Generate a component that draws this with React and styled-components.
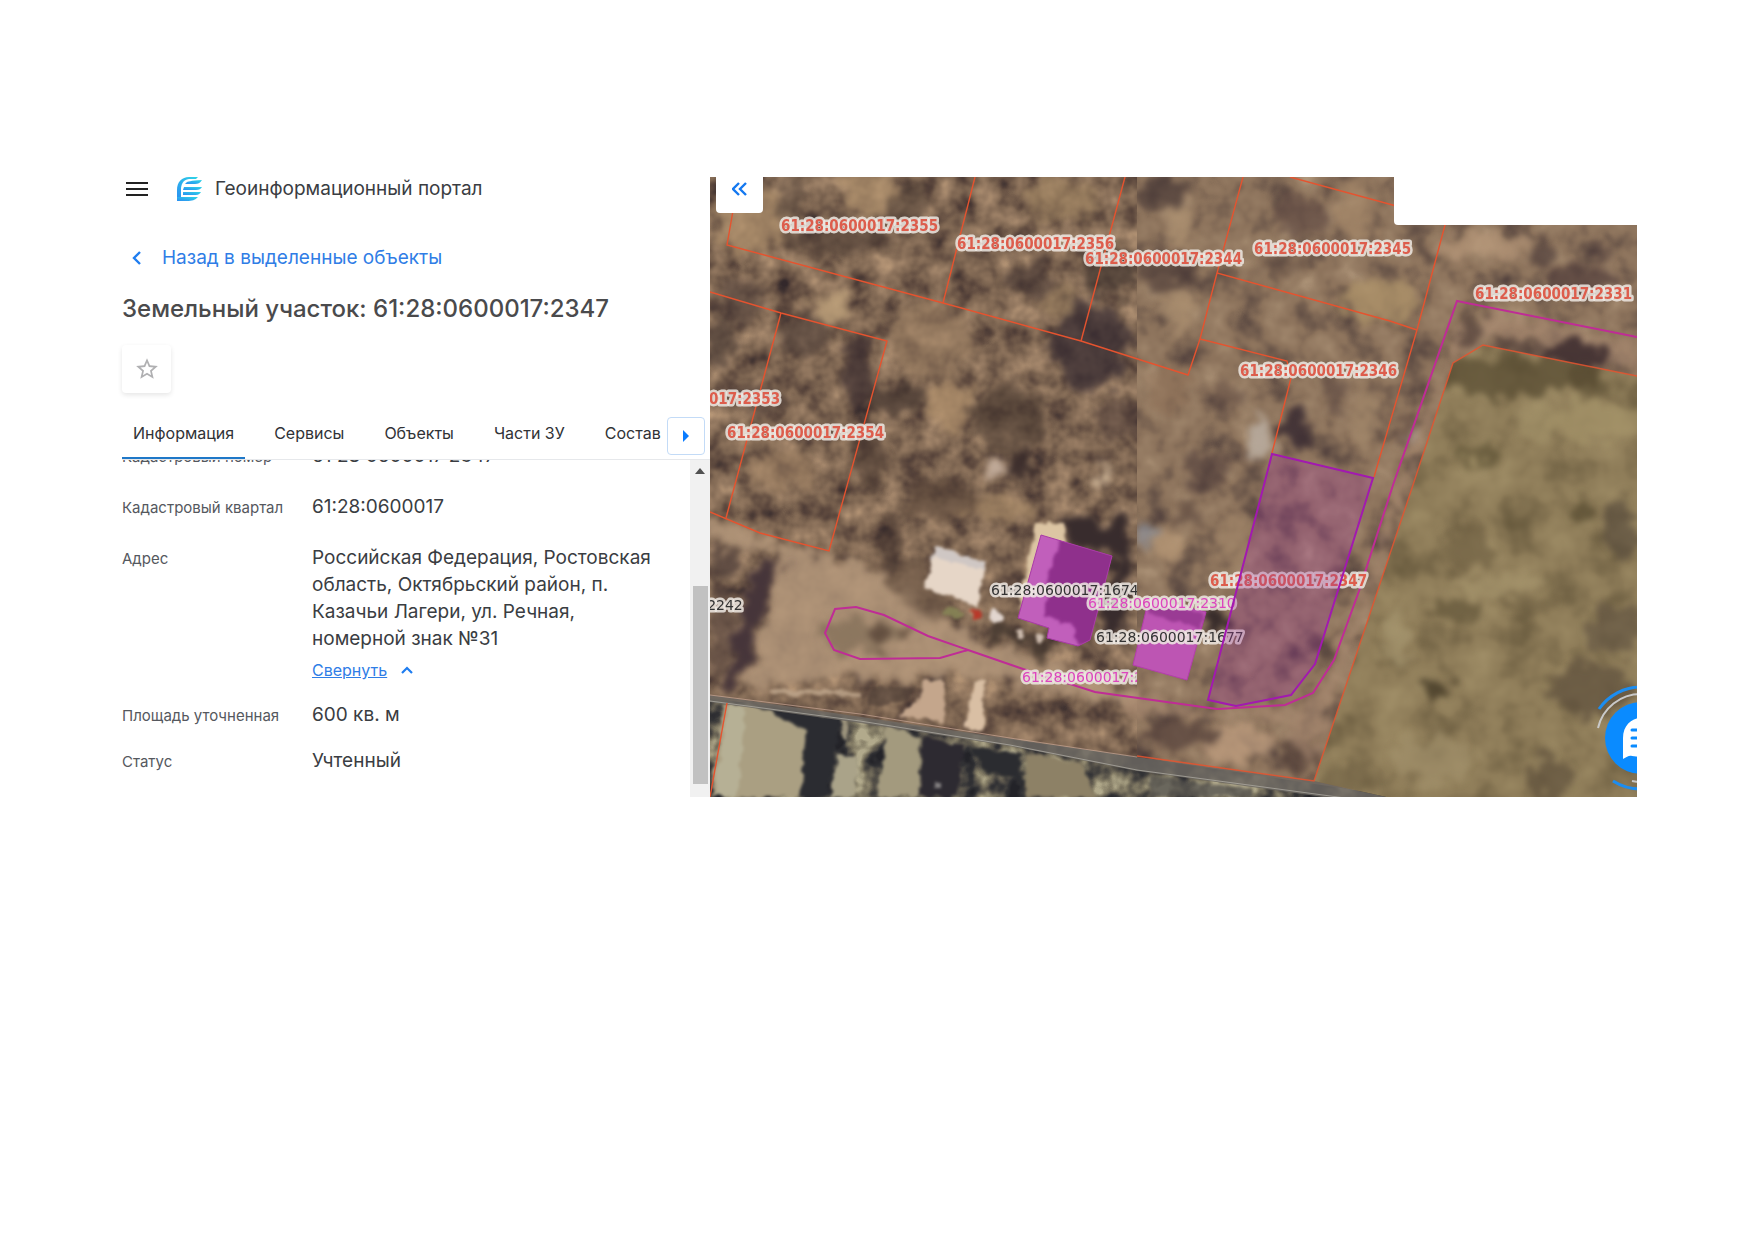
import React, { useState } from "react";
import styled, { createGlobalStyle } from "styled-components";

const GlobalStyle = createGlobalStyle`
  * {
    box-sizing: border-box;
  }
  body {
    margin: 0;
    background: #ffffff;
    color: #3a3d42;
    font-family: Inter, "Liberation Sans", sans-serif;
  }
  button {
    font-family: inherit;
    cursor: pointer;
  }
`;

const Page = styled.div`
  padding: 177px 118px;
`;

const Portal = styled.div`
  display: flex;
  overflow: hidden;
`;

const Panel = styled.section`
  width: 592px;
  flex: none;
  display: flex;
  flex-direction: column;
  padding-left: 4px;
`;

const Header = styled.header`
  display: flex;
  align-items: center;
  height: 24px;
  padding-left: 4px;
`;

const MenuButton = styled.button`
  display: flex;
  padding: 0;
  margin-right: 29px;
  border: none;
  background: none;
`;

const Brand = styled.span`
  margin-left: 12px;
  font-size: 19px;
  line-height: 24px;
`;

const BackLink = styled.a`
  display: flex;
  align-items: center;
  gap: 20px;
  margin-top: 45px;
  padding-left: 10px;
  font-size: 19px;
  line-height: 24px;
  color: #2f7de6;
  text-decoration: none;
`;

const Title = styled.h1`
  margin: 23px 0 0;
  font-size: 24px;
  font-weight: 500;
  line-height: 32px;
  color: #4a4a4c;
`;

const StarButton = styled.button`
  display: flex;
  align-items: center;
  justify-content: center;
  width: 49px;
  height: 48px;
  margin-top: 20px;
  border: none;
  border-radius: 4px;
  background: #ffffff;
  box-shadow: 0 2px 5px rgba(0, 0, 0, 0.1);
`;

const TabBar = styled.div`
  display: flex;
  align-items: center;
  height: 51px;
  margin-top: 16px;
  border-bottom: 1px solid #e6e8eb;
`;

const Tabs = styled.div`
  display: flex;
  flex: 1;
  gap: 18px;
  min-width: 0;
  overflow: hidden;
`;

const Tab = styled.button`
  flex: none;
  height: 50px;
  padding: 0 11px;
  border: none;
  border-bottom: 2px solid ${({ $active }) => ($active ? "#1f78c8" : "transparent")};
  background: none;
  font-size: 16px;
  color: #303236;
`;

const NextTabs = styled.button`
  display: flex;
  align-items: center;
  justify-content: center;
  width: 38px;
  height: 38px;
  margin: 4px 5px 0 0;
  padding: 0;
  border: 1px solid #c3dbf7;
  border-radius: 4px;
  background: #ffffff;
`;

const ScrollArea = styled.div`
  display: flex;
  height: 337px;
`;

const Details = styled.dl`
  display: flex;
  flex: 1;
  flex-direction: column;
  justify-content: flex-end;
  height: 337px;
  margin: 0;
  padding-bottom: 23px;
  overflow: hidden;
`;

const Row = styled.div`
  display: flex;
  align-items: baseline;
  flex: none;
  margin-top: ${({ $wide }) => ($wide ? 24 : 19)}px;
`;

const Term = styled.dt`
  width: 190px;
  flex: none;
  font-size: 15px;
  line-height: 20px;
  color: #55585e;
`;

const Value = styled.dd`
  margin: 0;
  max-width: 360px;
  font-size: 19px;
  line-height: 27px;
`;

const Collapse = styled.button`
  display: flex;
  align-items: center;
  gap: 14px;
  margin-top: 6px;
  padding: 0;
  border: none;
  background: none;
  font-size: 16px;
  line-height: 24px;
  color: #2f7de6;
  text-decoration: underline;
`;

const Scrollbar = styled.div`
  display: flex;
  flex-direction: column;
  justify-content: space-between;
  align-items: center;
  width: 20px;
  padding: 8px 2px 13px;
  background: #f1f1f1;
`;

const Thumb = styled.div`
  width: 15px;
  height: 198px;
  background: #c1c1c1;
`;

const MapBox = styled.section`
  position: relative;
  flex: 1;
  min-width: 0;
  overflow: hidden;
`;

const MapCanvas = styled.svg`
  display: block;
  width: 100%;
  height: 620px;
`;

const HidePanel = styled.button`
  position: absolute;
  top: 0;
  left: 6px;
  display: flex;
  justify-content: center;
  width: 47px;
  height: 36px;
  padding: 4px 0;
  border: none;
  border-radius: 0 0 4px 4px;
  background: #ffffff;
`;

const SearchBox = styled.div`
  position: absolute;
  top: 0;
  right: 0;
  width: 243px;
  height: 48px;
  border-radius: 0 0 0 4px;
  background: #ffffff;
`;

const ChatButton = styled.button`
  position: absolute;
  right: -58px;
  bottom: 5px;
  width: 108px;
  height: 108px;
  padding: 0;
  border: none;
  background: none;
`;

const MapLabel = styled.text`
  font-family: ${({ $kind }) => ($kind === "parcel" ? '"DejaVu Sans Condensed", ' : "")}"DejaVu Sans", sans-serif;
  font-size: ${({ $kind }) => ($kind === "parcel" ? 15 : 14)}px;
  font-weight: ${({ $kind }) => ($kind === "parcel" ? 700 : 400)};
  fill: ${({ $kind }) => ({ parcel: "#dd5d4c", building: "#333333", network: "#dd45be" })[$kind]};
  stroke: #efe9e3;
  stroke-width: 5px;
  stroke-linejoin: round;
  stroke-opacity: 0.85;
  paint-order: stroke;
`;

const TABS = ["Информация", "Сервисы", "Объекты", "Части ЗУ", "Состав"];

const PARCEL_LINES = [
  "734,205 727,245 943,303 1081,341 1188,375 1200,339 1217,273 1243,177",
  "975,177 943,303",
  "1125,177 1081,341",
  "1200,339 1287,361 1291,378 1272,453",
  "1217,273 1390,321 1417,330",
  "1449,210 1417,330 1374,477",
  "1290,177 1400,207",
  "710,292 781,313 887,341 829,551 760,533 710,512",
  "781,313 726,518",
  "727,703 710,797",
];

const LABELS = [
  { text: "61:28:0600017:2355", x: 781, y: 231, kind: "parcel" },
  { text: "61:28:0600017:2356", x: 957, y: 249, kind: "parcel" },
  { text: "61:28:0600017:2344", x: 1085, y: 264, kind: "parcel" },
  { text: "61:28:0600017:2345", x: 1254, y: 254, kind: "parcel" },
  { text: "61:28:0600017:2331", x: 1475, y: 299, kind: "parcel" },
  { text: "61:28:0600017:2346", x: 1240, y: 376, kind: "parcel" },
  { text: "61:28:0600017:2353", x: 623, y: 404, kind: "parcel" },
  { text: "61:28:0600017:2354", x: 727, y: 438, kind: "parcel" },
  { text: "61:28:0600017:2347", x: 1210, y: 586, kind: "parcel" },
  { text: "61:28:0600017:2242", x: 595, y: 610, kind: "building" },
  { text: "61:28:0600017:1677", x: 1096, y: 642, kind: "building" },
  { text: "61:28:0600017:1674", x: 991, y: 595, kind: "building", clip: "url(#westTile)" },
  { text: "61:28:0600017:2", x: 1022, y: 682, kind: "network", clip: "url(#westTile)" },
  { text: "61:28:0600017:2310", x: 1088, y: 608, kind: "network" },
];

// soft tonal patches of the aerial photo: cx, cy, rx, ry, colour, opacity
const PATCHES = [
  [750, 220, 34, 34, "#b3946f", 0.7],
  [870, 190, 30, 26, "#b3946f", 0.7],
  [790, 195, 14, 30, "#54433a", 0.5],
  [910, 205, 18, 24, "#4f4035", 0.5],
  [840, 240, 60, 12, "#4c3c34", 0.6],
  [740, 300, 24, 22, "#4b3b37", 0.5],
  [720, 345, 14, 26, "#4f3f39", 0.6],
  [832, 310, 20, 16, "#bfa27c", 0.8],
  [858, 370, 16, 34, "#3f3032", 0.75],
  [900, 400, 30, 12, "#43342f", 0.7],
  [800, 335, 26, 20, "#4a3a36", 0.6],
  [760, 400, 30, 14, "#4c3b37", 0.5],
  [930, 340, 40, 36, "#9b7f62", 0.6],
  [950, 405, 22, 26, "#b3936d", 0.7],
  [870, 460, 14, 34, "#493830", 0.6],
  [780, 470, 34, 18, "#a08264", 0.6],
  [1010, 420, 34, 34, "#46372f", 0.6],
  [1030, 280, 22, 16, "#463733", 0.6],
  [1090, 345, 40, 44, "#3a2e33", 0.75],
  [1110, 275, 26, 24, "#40332f", 0.6],
  [1060, 200, 34, 24, "#a68a66", 0.6],
  [1060, 300, 22, 18, "#a68a66", 0.5],
  [1017, 468, 14, 12, "#352828", 0.9],
  [995, 468, 8, 6, "#cdb8a8", 0.8],
  [1105, 478, 8, 14, "#d8bfa0", 0.9],
  [940, 500, 34, 20, "#5a4638", 0.6],
  [1000, 510, 40, 12, "#a98a68", 0.6],
  [890, 540, 12, 30, "#43332e", 0.5],
  [1120, 420, 24, 20, "#4d3c37", 0.5],
];

const EAST_PATCHES = [
  [1165, 192, 30, 14, "#4a3a38", 0.7],
  [1170, 270, 30, 20, "#4b3b37", 0.6],
  [1180, 225, 14, 24, "#b19474", 0.7],
  [1178, 310, 14, 24, "#b19474", 0.7],
  [1300, 215, 26, 22, "#5a4540", 0.6],
  [1280, 265, 26, 12, "#5f4a40", 0.4],
  [1355, 210, 20, 34, "#a88a6a", 0.6],
  [1380, 300, 36, 24, "#b0966b", 0.7],
  [1170, 390, 24, 24, "#8f7259", 0.6],
  [1225, 400, 20, 14, "#55413c", 0.4],
  [1260, 440, 14, 24, "#b8ab9d", 0.9],
  [1297, 432, 14, 20, "#3c2d33", 0.9],
  [1335, 395, 12, 20, "#5b4741", 0.6],
  [1365, 420, 12, 36, "#a58a6c", 0.6],
  [1205, 470, 20, 18, "#4c3a38", 0.6],
  [1190, 515, 12, 14, "#56433b", 0.6],
  [1168, 545, 14, 20, "#b99a78", 0.7],
  [1145, 535, 9, 12, "#8f98a6", 0.6],
  [1235, 540, 16, 30, "#a58a6c", 0.5],
  [1215, 620, 14, 14, "#2e2425", 0.9],
  [1480, 245, 50, 14, "#b79779", 0.7],
  [1500, 188, 50, 10, "#5b4843", 0.6],
  [1545, 250, 12, 16, "#4f3d3b", 0.7],
  [1585, 280, 38, 14, "#523f3c", 0.7],
  [1600, 250, 14, 10, "#4f3d3b", 0.5],
  [1180, 735, 34, 14, "#54403a", 0.7],
  [1240, 745, 30, 18, "#c4a383", 0.7],
  [1300, 755, 18, 20, "#4f3c36", 0.7],
];

const ROADSIDE_PATCHES = [
  [1575, 357, 34, 14, "#3e2e30", 0.9],
  [1472, 330, 12, 16, "#4f3d38", 0.7],
  [1520, 346, 26, 6, "#4f3d38", 0.7],
  [1405, 430, 14, 16, "#55413c", 0.5],
  [1412, 430, 7, 9, "#cdb9ad", 0.7],
  [1340, 580, 10, 14, "#5d4940", 0.6],
  [1322, 645, 7, 12, "#54413b", 0.6],
];

const FIELD_PATCHES = [
  [1510, 375, 90, 20, "#554a30", 0.7],
  [1590, 380, 16, 22, "#554a30", 0.6],
  [1600, 420, 50, 20, "#a5946a", 0.7],
  [1540, 425, 20, 20, "#a5946a", 0.6],
  [1475, 455, 18, 16, "#5e5236", 0.7],
  [1475, 460, 6, 8, "#a5946a", 0.8],
  [1470, 548, 24, 22, "#6a5c40", 0.6],
  [1583, 508, 10, 10, "#54482f", 0.7],
  [1622, 530, 16, 30, "#54483a", 0.6],
  [1455, 610, 24, 10, "#5f5238", 0.7],
  [1500, 585, 50, 12, "#a5946c", 0.7],
  [1530, 605, 26, 6, "#6a5c40", 0.5],
  [1436, 690, 14, 12, "#4c412c", 0.9],
  [1615, 630, 30, 24, "#5d5040", 0.6],
  [1590, 690, 40, 26, "#5d4f3c", 0.7],
  [1550, 780, 20, 28, "#5c4e3a", 0.7],
  [1435, 760, 40, 24, "#a08f69", 0.7],
  [1395, 640, 12, 30, "#a5966f", 0.7],
  [1350, 780, 30, 14, "#6a5c40", 0.5],
];

// gain sets how far the noise spreads over the colour ramp
const Noise = ({ id, freq, seed, gain, r, g, b }) => {
  const row = `${gain} 0 0 0 ${0.5 - gain / 2}`;
  return (
    <filter id={id} x="0" y="0" width="100%" height="100%" colorInterpolationFilters="sRGB">
      <feTurbulence type="fractalNoise" baseFrequency={freq} numOctaves="3" seed={seed} />
      <feColorMatrix values={`${row} ${row} ${row} 0 0 0 0 1`} />
      <feComponentTransfer>
        <feFuncR type="table" tableValues={r} />
        <feFuncG type="table" tableValues={g} />
        <feFuncB type="table" tableValues={b} />
      </feComponentTransfer>
      <feComposite in2="SourceAlpha" operator="in" />
    </filter>
  );
};

const Patches = ({ items }) => (
  <g filter="url(#soft)">
    {items.map(([cx, cy, rx, ry, fill, opacity]) => (
      <ellipse key={`${cx}-${cy}`} cx={cx} cy={cy} rx={rx} ry={ry} fill={fill} opacity={opacity} />
    ))}
  </g>
);

const Aerial = () => (
  <g>
    <rect x="710" y="177" width="927" height="620" filter="url(#soil)" />
    <Patches items={PATCHES} />

    <g clipPath="url(#eastTile)">
      <rect x="1130" y="177" width="507" height="620" filter="url(#soilSoft)" />
      <Patches items={EAST_PATCHES} />
    </g>

    {/* dirt road and yard */}
    <g filter="url(#soft)">
      <path
        d="M710 516 L760 536 L832 556 L880 575 L930 605 L985 640 L1060 668 L1137 690 L1137 705 L1060 692 L960 672 L900 680 L840 678 L745 686 L768 620 L782 555 L745 552 L710 535Z"
        fill="#b3967a"
        opacity="0.85"
      />
      <path
        d="M1130 690 L1210 712 L1290 708 L1325 690 L1345 640 L1400 480 L1460 330 L1500 310 L1637 345 L1637 365 L1480 340 L1450 360 L1310 770 L1290 720 L1130 712Z"
        fill="#ab8c73"
        opacity="0.6"
      />
    </g>
    <Patches items={ROADSIDE_PATCHES} />
    <g filter="url(#soft)">
      <path d="M758 560 L782 558 L768 600 L742 685 L722 690 L736 630Z" fill="#46353a" />
      <path d="M712 540 L745 548 L740 580 L712 575Z" fill="#54423c" opacity="0.8" />
      <path d="M712 590 L738 590 L728 650 L712 680Z" fill="#5c4840" opacity="0.7" />
      <ellipse cx="860" cy="635" rx="44" ry="17" fill="#85705a" opacity="0.8" />
      <ellipse cx="880" cy="635" rx="9" ry="12" fill="#5a4639" opacity="0.8" />
      <ellipse cx="903" cy="633" rx="5" ry="5" fill="#5a4639" opacity="0.7" />
      <path d="M870 560 L920 560 L945 600 L960 620 L940 625 L895 595Z" fill="#6a5544" opacity="0.6" />
      <path d="M990 610 L1020 632 L1050 645 L1050 658 L1010 642 L985 630Z" fill="#3f332c" opacity="0.8" />
      <path d="M1070 515 L1095 522 L1128 512 L1130 560 L1112 560 L1100 640 L1128 625 L1128 560 L1068 540Z" fill="#382c2d" />
    </g>
    <g filter="url(#edge)">
      <path d="M935 548 L985 562 L978 606 L924 588Z" fill="#e6d6c7" />
      <path d="M935 548 L985 562 L984 570 L932 556Z" fill="#cfc7c4" />
      <path d="M1036 523 L1066 523 L1064 560 L1040 610 L1018 608Z" fill="#dcc5a3" />
      <path d="M969 610 L980 609 L981 617 L971 619Z" fill="#b8392a" />
      <ellipse cx="953" cy="613" rx="10" ry="5" fill="#8a8a58" opacity="0.8" />
      <circle cx="996" cy="617" r="6" fill="#e2d6cf" />
      <circle cx="1020" cy="634" r="4" fill="#cdbcae" />
      <circle cx="1038" cy="638" r="4" fill="#cdbcae" />
      <path d="M974 682 L985 681 L983 731 L964 728Z" fill="#d9bfa4" />
      <path d="M925 680 L945 680 L944 722 L898 716 L920 698Z" fill="#c4a68c" />
      <path d="M770 690 L860 691 L860 696 L770 695Z" fill="#c9b096" opacity="0.7" />
      <path d="M872 686 L918 688 L905 702 L866 708Z" fill="#4a3a34" opacity="0.6" />
    </g>

    {/* strip south of the road */}
    <path d="M710 698 L1137 757 L1400 797 L710 797Z" filter="url(#yard)" />
    <g filter="url(#edge)">
      <path d="M724 703 L755 705 L800 716 L808 735 L806 788 L797 797 L710 797Z" fill="#aa9f82" />
      <path d="M728 704 L745 706 L738 797 L714 797Z" fill="#b9b49a" opacity="0.8" />
      <path d="M755 704 L840 717 L836 757 L826 797 L800 797 L806 730Z" fill="#2b2c31" />
      <path d="M840 718 L848 719 L848 740 L843 740Z" fill="#9d947d" />
      <path d="M838 755 L858 757 L855 797 L830 797Z" fill="#aaa389" />
      <path d="M886 724 L918 737 L920 797 L876 797 L884 760Z" fill="#a39a7e" />
      <path d="M922 738 L965 745 L957 797 L920 797Z" fill="#2d2a31" />
      <path d="M970 747 L1022 754 L1020 778 L985 772Z" fill="#2b2c30" />
      <path d="M1027 753 L1080 762 L1096 797 L1024 797Z" fill="#8d8166" />
      <path d="M1150 775 L1250 789 L1250 797 L1150 797Z" fill="#4c4a49" opacity="0.7" />
      <rect x="934" y="783" width="8" height="6" fill="#aaa7a5" opacity="0.7" />
    </g>
    <path d="M710 695 L1137 757 L1314 781 L1400 800 L1345 800 L1137 771 L1010 746 L860 723 L710 702Z" fill="#6d6863" opacity="0.85" />
    <polyline points="710,701 860,721 1010,745 1137,770 1360,800" fill="none" stroke="#b4b0a8" opacity="0.7" />
    <polyline points="710,695 860,714 1010,738 1137,757" fill="none" stroke="#c9a796" opacity="0.7" />

    <g clipPath="url(#field)">
      <rect x="1300" y="340" width="337" height="457" filter="url(#grass)" />
      <Patches items={FIELD_PATCHES} />
    </g>
  </g>
);

const PlotMap = () => (
  <MapCanvas viewBox="710 177 927 620" preserveAspectRatio="xMidYMid slice" role="img" aria-label="Карта участков">
    <defs>
      <Noise id="soil" freq="0.04" seed="8" gain="1.2" r="0.2 0.36 0.5 0.61 0.74" g="0.16 0.28 0.405 0.5 0.61" b="0.17 0.24 0.325 0.4 0.48" />
      <Noise id="soilSoft" freq="0.03" seed="21" gain="1.1" r="0.28 0.42 0.55 0.61 0.7" g="0.22 0.34 0.45 0.51 0.6" b="0.22 0.29 0.36 0.41 0.49" />
      <Noise id="grass" freq="0.024" seed="5" gain="0.9" r="0.38 0.46 0.56 0.61 0.65" g="0.33 0.4 0.49 0.54 0.58" b="0.22 0.28 0.35 0.39 0.43" />
      <Noise id="yard" freq="0.04" seed="13" gain="2.2" r="0.14 0.2 0.36 0.52 0.7" g="0.14 0.2 0.34 0.49 0.67" b="0.16 0.21 0.3 0.4 0.55" />
      <filter id="soft" x="-10%" y="-10%" width="120%" height="120%" colorInterpolationFilters="sRGB">
        <feTurbulence type="fractalNoise" baseFrequency="0.06" numOctaves="3" seed="4" result="n" />
        <feDisplacementMap in="SourceGraphic" in2="n" scale="36" xChannelSelector="R" yChannelSelector="G" />
        <feGaussianBlur stdDeviation="3" />
      </filter>
      <filter id="edge" x="-10%" y="-10%" width="120%" height="120%" colorInterpolationFilters="sRGB">
        <feTurbulence type="fractalNoise" baseFrequency="0.09" numOctaves="2" seed="9" result="n" />
        <feDisplacementMap in="SourceGraphic" in2="n" scale="9" xChannelSelector="R" yChannelSelector="G" />
        <feGaussianBlur stdDeviation="1.7" />
      </filter>
      <clipPath id="westTile">
        <rect x="710" y="177" width="427" height="620" />
      </clipPath>
      <clipPath id="eastTile">
        <rect x="1137" y="177" width="500" height="620" />
      </clipPath>
      <clipPath id="field">
        <polygon points="1637,376 1483,345 1453,363 1413,485 1314,781 1400,800 1637,800" />
      </clipPath>
      <clipPath id="house">
        <polygon points="1041,535 1112,556 1090,640 1078,646 1047,638 1049,628 1018,618" />
      </clipPath>
    </defs>

    <Aerial />

    <g fill="none" stroke="#e5532f" strokeWidth="1.4">
      {PARCEL_LINES.map((points) => (
        <polyline key={points} points={points} />
      ))}
      <polyline points="1637,376 1483,345 1453,363 1413,485 1314,781 1137,756" opacity="0.85" />
    </g>

    <g clipPath="url(#house)">
      <rect x="1010" y="530" width="110" height="120" fill="#c15fbb" />
      <path d="M1062 530 L1125 545 L1100 650 L1078 644 L1072 624 L1045 618 L1050 570Z" fill="#8f308c" filter="url(#edge)" />
    </g>
    <polygon points="1041,535 1112,556 1090,640 1078,646 1047,638 1049,628 1018,618" fill="none" stroke="#a83aa6" />
    <polygon points="1149,598 1206,612 1187,680 1133,665" fill="#bd55b3" stroke="#b43cae" />
    <path d="M1149 602 L1204 614 L1200 628 L1180 622 L1147 616Z" fill="#9a3b94" filter="url(#edge)" />

    <polyline
      points="1637,337 1457,301 1393,485 1359,591 1334,660 1313,693 1285,705 1217,709 1095,692 1023,669 968,650 928,636 884,615 856,607 835,609 825,633 834,650 860,659 940,658 968,650"
      fill="none"
      stroke="#bf2c96"
      strokeWidth="2"
    />

    {LABELS.map(({ text, x, y, kind, clip }) => (
      <g key={text} clipPath={clip}>
        <MapLabel x={x} y={y} $kind={kind}>
          {text}
        </MapLabel>
      </g>
    ))}

    <polygon
      points="1272,454 1373,478 1315,664 1291,695 1236,706 1208,700"
      fill="rgba(160, 60, 150, 0.32)"
      stroke="#a219b0"
      strokeWidth="2"
    />
  </MapCanvas>
);

const Logo = () => (
  <svg width="26" height="24" viewBox="0 0 26 24" aria-hidden="true">
    <defs>
      <linearGradient id="brand" x1="0" y1="1" x2="1" y2="0">
        <stop offset="0" stopColor="#2a8df2" />
        <stop offset="1" stopColor="#2fd6e6" />
      </linearGradient>
    </defs>
    <path d="M0 24 V13 C0 5 5 0 12 0 H21 L19 2 H12 C6 3 4 7 4 13 V20 H15 L12 24Z" fill="url(#brand)" />
    <path d="M9 6 C11 4 13 4 25 3 C23 6 21 7 18 7 H8Z" fill="url(#brand)" />
    <path d="M7 10 H25 C24 12 22 13 19 13 H6Z" fill="url(#brand)" />
    <path d="M6 15 H24 C22 18 20 18 17 18 H6Z" fill="url(#brand)" />
    <path d="M0 20 H21 C18 23 15 24 10 24 H0Z" fill="url(#brand)" />
  </svg>
);

function App() {
  const [activeTab, setActiveTab] = useState(TABS[0]);

  return (
    <>
      <GlobalStyle />
      <Page>
        <Portal>
          <Panel>
            <Header>
              <MenuButton aria-label="Меню">
                <svg width="22" height="16" viewBox="0 0 22 16" stroke="#222" strokeWidth="2">
                  <path d="M0 2H22M0 8H22M0 14H22" />
                </svg>
              </MenuButton>
              <Logo />
              <Brand>Геоинформационный портал</Brand>
            </Header>

            <BackLink href="#selected">
              <svg width="10" height="14" viewBox="0 0 10 14" fill="none" stroke="#1f7df0" strokeWidth="2.4">
                <path d="M8 1L2 7L8 13" />
              </svg>
              Назад в выделенные объекты
            </BackLink>
            <Title>Земельный участок: 61:28:0600017:2347</Title>
            <StarButton aria-label="В избранное">
              <svg width="26" height="26" viewBox="0 0 24 24" fill="#b0b0b2">
                <path d="M22 9.24l-7.19-.62L12 2 9.19 8.63 2 9.24l5.46 4.73L5.82 21 12 17.27 18.18 21l-1.63-7.03L22 9.24zM12 15.4l-3.76 2.27 1-4.28-3.32-2.88 4.38-.38L12 6.1l1.71 4.04 4.38.38-3.32 2.88 1 4.28L12 15.4z" />
              </svg>
            </StarButton>

            <TabBar>
              <Tabs role="tablist">
                {TABS.map((tab) => (
                  <Tab
                    key={tab}
                    role="tab"
                    aria-selected={tab === activeTab}
                    $active={tab === activeTab}
                    onClick={() => setActiveTab(tab)}
                  >
                    {tab}
                  </Tab>
                ))}
              </Tabs>
              <NextTabs aria-label="Следующие вкладки">
                <svg width="6" height="12" viewBox="0 0 6 12" fill="#0a7cff">
                  <path d="M0 0L6 6L0 12Z" />
                </svg>
              </NextTabs>
            </TabBar>

            <ScrollArea>
              <Details>
                <Row>
                  <Term>Кадастровый номер</Term>
                  <Value>61:28:0600017:2347</Value>
                </Row>
                <Row $wide>
                  <Term>Кадастровый квартал</Term>
                  <Value>61:28:0600017</Value>
                </Row>
                <Row $wide>
                  <Term>Адрес</Term>
                  <Value>
                    Российская Федерация, Ростовская область, Октябрьский район, п. Казачьи Лагери, ул. Речная,
                    номерной знак №31
                    <Collapse>
                      Свернуть
                      <svg width="12" height="8" viewBox="0 0 12 8" fill="none" stroke="#1f7df0" strokeWidth="2.2">
                        <path d="M1 7L6 2L11 7" />
                      </svg>
                    </Collapse>
                  </Value>
                </Row>
                <Row>
                  <Term>Площадь уточненная</Term>
                  <Value>600 кв. м</Value>
                </Row>
                <Row>
                  <Term>Статус</Term>
                  <Value>Учтенный</Value>
                </Row>
              </Details>
              <Scrollbar aria-hidden="true">
                <svg width="10" height="6" viewBox="0 0 10 6" fill="#505050">
                  <path d="M5 0L10 6H0Z" />
                </svg>
                <Thumb />
              </Scrollbar>
            </ScrollArea>
          </Panel>

          <MapBox>
            <PlotMap />
            <HidePanel aria-label="Скрыть панель">
              <svg width="16" height="16" viewBox="0 0 16 16" fill="none" stroke="#1478f0" strokeWidth="2.4">
                <path d="M7 2L1 8L7 14M14 2L8 8L14 14" />
              </svg>
            </HidePanel>
            <SearchBox />
            <ChatButton aria-label="Чат">
              <svg width="108" height="108" viewBox="-54 -54 108 108" fill="none">
                <circle r="36" fill="#0a8bff" />
                <path d="M-42 -29A51 51 0 0 1 0 -51M-28 43A51 51 0 0 0 0 51" stroke="#1c8df0" strokeWidth="3" />
                <path d="M-43 -10A44 44 0 0 1 0 -44M-9 43A44 44 0 0 0 0 44" stroke="#c9c9c9" strokeWidth="2" />
                <path d="M-18 21V0C-18 -12 -10 -20 0 -20S18 -12 18 0S10 19 0 19C-4 19 -6 18 -9 18C-12 17 -14 19 -18 21Z" fill="#fff" />
                <path d="M-9 -8H9M-9 0H9M-9 8H9" stroke="#0a8bff" strokeWidth="3" strokeLinecap="round" />
              </svg>
            </ChatButton>
          </MapBox>
        </Portal>
      </Page>
    </>
  );
}

export default App;
